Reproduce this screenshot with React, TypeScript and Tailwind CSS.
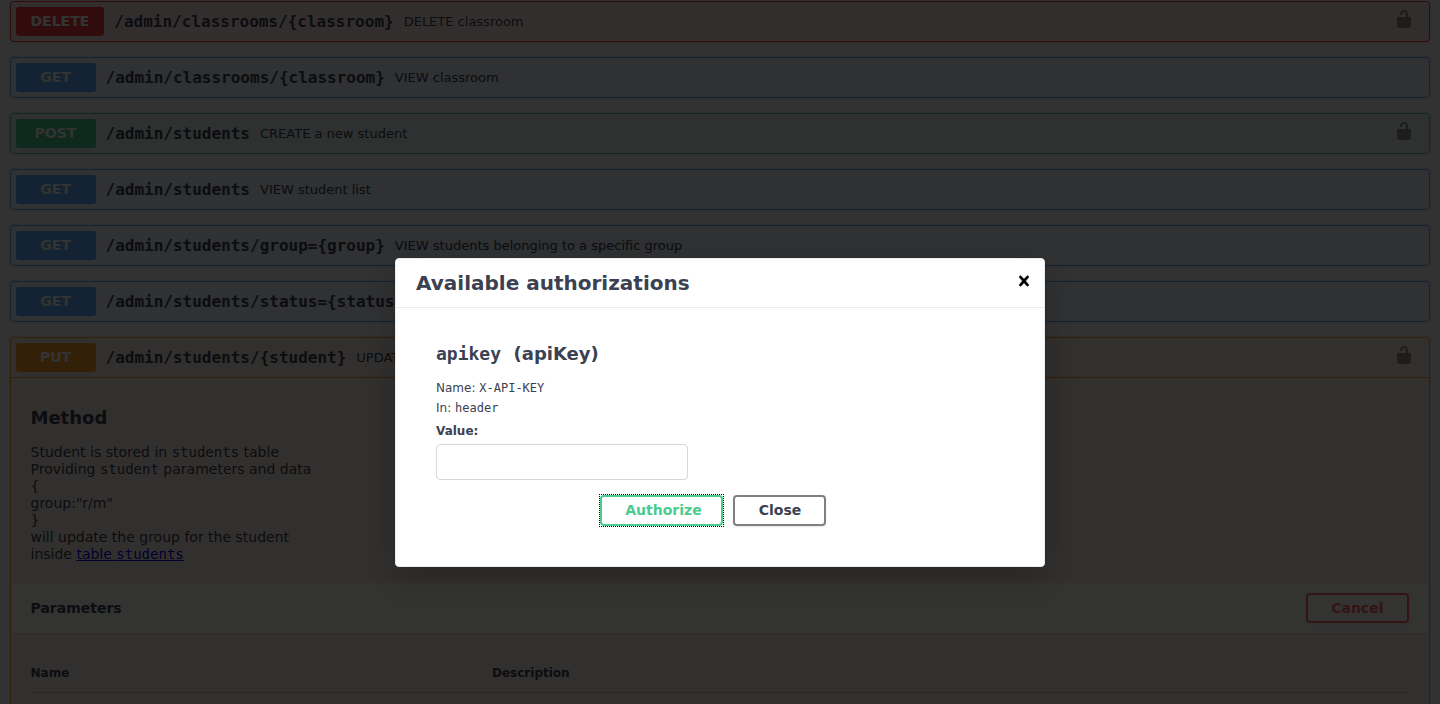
import React from "react";

type Method = "DELETE" | "GET" | "POST" | "PUT";

const blockTone: Record<Method, string> = {
  DELETE: "border-[#f93e3e] bg-[#f93e3e]/10",
  GET: "border-[#61affe] bg-[#61affe]/10",
  POST: "border-[#49cc90] bg-[#49cc90]/10",
  PUT: "border-[#fca130] bg-[#fca130]/10",
};

const badgeTone: Record<Method, string> = {
  DELETE: "bg-[#f93e3e]",
  GET: "bg-[#61affe]",
  POST: "bg-[#49cc90]",
  PUT: "bg-[#fca130]",
};

type Operation = { method: Method; path: string; summary: string; locked?: boolean };

const operations: Operation[] = [
  { method: "DELETE", path: "/admin/classrooms/{classroom}", summary: "DELETE classroom", locked: true },
  { method: "GET", path: "/admin/classrooms/{classroom}", summary: "VIEW classroom" },
  { method: "POST", path: "/admin/students", summary: "CREATE a new student", locked: true },
  { method: "GET", path: "/admin/students", summary: "VIEW student list" },
  { method: "GET", path: "/admin/students/group={group}", summary: "VIEW students belonging to a specific group" },
  { method: "GET", path: "/admin/students/status={status}", summary: "" },
];

function UnlockedIcon() {
  return (
    <svg className="h-5 w-5 opacity-40" viewBox="0 0 20 20" fill="#000">
      <path d="M15.8 8H14V5.6C14 2.703 12.665 1 10 1 7.334 1 6 2.703 6 5.6V6h2v-.801C8 3.754 8.797 3 10 3c1.203 0 2 .754 2 2.199V8H4c-.553 0-1 .646-1 1.199V17c0 .549.428 1.139.951 1.307l1.197.387C5.672 18.861 6.55 19 7.1 19h5.8c.549 0 1.428-.139 1.951-.307l1.196-.387c.524-.167.953-.757.953-1.306V9.199C17 8.646 16.352 8 15.8 8z" />
    </svg>
  );
}

function CloseIcon() {
  return (
    <svg className="h-5 w-5" viewBox="0 0 20 20" fill="#000" stroke="#000" strokeWidth="0.5">
      <path d="M14.348 14.849c-.469.469-1.229.469-1.697 0L10 11.819l-2.651 3.029c-.469.469-1.229.469-1.697 0-.469-.469-.469-1.229 0-1.697l2.758-3.15-2.759-3.152c-.469-.469-.469-1.228 0-1.697.469-.469 1.228-.469 1.697 0L10 8.183l2.651-3.031c.469-.469 1.228-.469 1.697 0 .469.469.469 1.229 0 1.697l-2.758 3.152 2.758 3.15c.469.469.469 1.229 0 1.698z" />
    </svg>
  );
}

function Mono({ children }: { children: React.ReactNode }) {
  return <code className="font-['DejaVu_Sans_Mono',monospace] text-[1em]">{children}</code>;
}

function Summary({ method, path, summary, locked }: Operation) {
  return (
    <div className="flex h-[39px] items-center p-[5px] whitespace-nowrap">
      <span
        className={`h-[29px] min-w-20 rounded-[3px] px-[15px] text-center text-sm leading-[29px] font-bold text-white [text-shadow:0_1px_0_rgba(0,0,0,.1)] ${badgeTone[method]}`}
      >
        {method}
      </span>
      <span className="px-2.5 font-['DejaVu_Sans_Mono',monospace] text-base leading-[19px] font-semibold">
        {path}
      </span>
      <span className="flex-1 text-[13px]">{summary}</span>
      {locked && (
        <span className="mr-2.5 pb-1.5">
          <UnlockedIcon />
        </span>
      )}
    </div>
  );
}

function Page() {
  return (
    <main className="flex flex-col gap-[15px] pt-px pr-[10.2px] pl-[9.5px]">
      {operations.map((op) => (
        <section
          key={op.method + op.path}
          className={`rounded-sm border shadow-[0_0_3px_rgba(0,0,0,.19)] ${blockTone[op.method]}`}
        >
          <Summary {...op} />
        </section>
      ))}
      <section className={`h-[500px] rounded-sm border shadow-[0_0_3px_rgba(0,0,0,.19)] ${blockTone.PUT}`}>
        <div className="border-b border-[#fca130]">
          <Summary method="PUT" path="/admin/students/{student}" summary="UPDATE" locked />
        </div>
        <div className="h-[205px] px-5 pt-[29px]">
          <h2 className="text-lg leading-[22px] font-bold">Method</h2>
          <p className="mt-[15px] text-sm leading-[17px]">
            Student is stored in <Mono>students</Mono> table
            <br />
            Providing <Mono>student</Mono> parameters and data
            <br />
            {"{"}
            <br />
            group:"r/m"
            <br />
            {"}"}
            <br />
            will update the group for the student
            <br />
            inside{" "}
            <a href="#" className="text-[#0000ee] underline">
              table <Mono>students</Mono>
            </a>
          </p>
        </div>
        <div className="flex h-[50px] items-center justify-between bg-white/80 px-5 shadow-[0_1px_2px_rgba(0,0,0,.1)]">
          <h4 className="text-sm font-bold">Parameters</h4>
          <button className="h-[30px] w-[103px] rounded-sm border-2 border-[#ff6060] text-sm leading-none font-bold text-[#ff6060] shadow-[0_1px_2px_rgba(0,0,0,.1)]">
            Cancel
          </button>
        </div>
        <div className="p-5">
          <div className="flex h-10 items-center border-b border-[#3b4151]/20 text-xs font-bold">
            <span className="w-[461.5px]">Name</span>
            <span>Description</span>
          </div>
        </div>
      </section>
    </main>
  );
}

function AuthorizationDialog() {
  return (
    <div className="h-[309px] w-[650px] rounded-sm border border-[#ebebeb] bg-white shadow-[0_10px_30px_rgba(0,0,0,.2)]">
      <div className="flex h-[49px] items-center justify-between border-b border-[#ebebeb] pr-2.5 pl-5">
        <h3 className="text-xl font-semibold">Available authorizations</h3>
        <button className="pb-1">
          <CloseIcon />
        </button>
      </div>
      <div className="px-10 pt-[35px] text-xs">
        <h4 className="text-lg leading-[22px] font-bold">
          <Mono>apikey</Mono>&nbsp; (apiKey)
        </h4>
        <p className="mt-[13px] leading-5">
          Name: <Mono>X-API-KEY</Mono>
        </p>
        <p className="leading-5">
          In: <Mono>header</Mono>
        </p>
        <label className="mt-1.5 block leading-[14px] font-bold" htmlFor="api-key">
          Value:
        </label>
        <input
          id="api-key"
          className="mt-1.5 block h-9 w-[252px] rounded-sm border border-[#d9d9d9] bg-white px-2.5"
        />
        <div className="mt-[15px] flex gap-2.5 pl-[164px] text-sm font-bold">
          <div className="flex outline outline-1 outline-dotted outline-black">
            <button className="h-[31px] w-[123px] rounded-sm border-2 border-[#49cc90] pb-0.5 pl-1 leading-4 text-[#49cc90]">
              Authorize
            </button>
          </div>
          <button className="h-[31px] w-[93px] rounded-sm border-2 border-[#808080] pb-0.5 pl-px leading-4 shadow-[0_1px_2px_rgba(0,0,0,.1)]">
            Close
          </button>
        </div>
      </div>
    </div>
  );
}

export default function App() {
  return (
    <div className="relative h-[704px] overflow-hidden bg-[#fafafa] font-['DejaVu_Sans',sans-serif] text-[#3b4151]">
      <Page />
      <div className="absolute inset-0 flex justify-center bg-black/80 pt-[258px]">
        <AuthorizationDialog />
      </div>
    </div>
  );
}
